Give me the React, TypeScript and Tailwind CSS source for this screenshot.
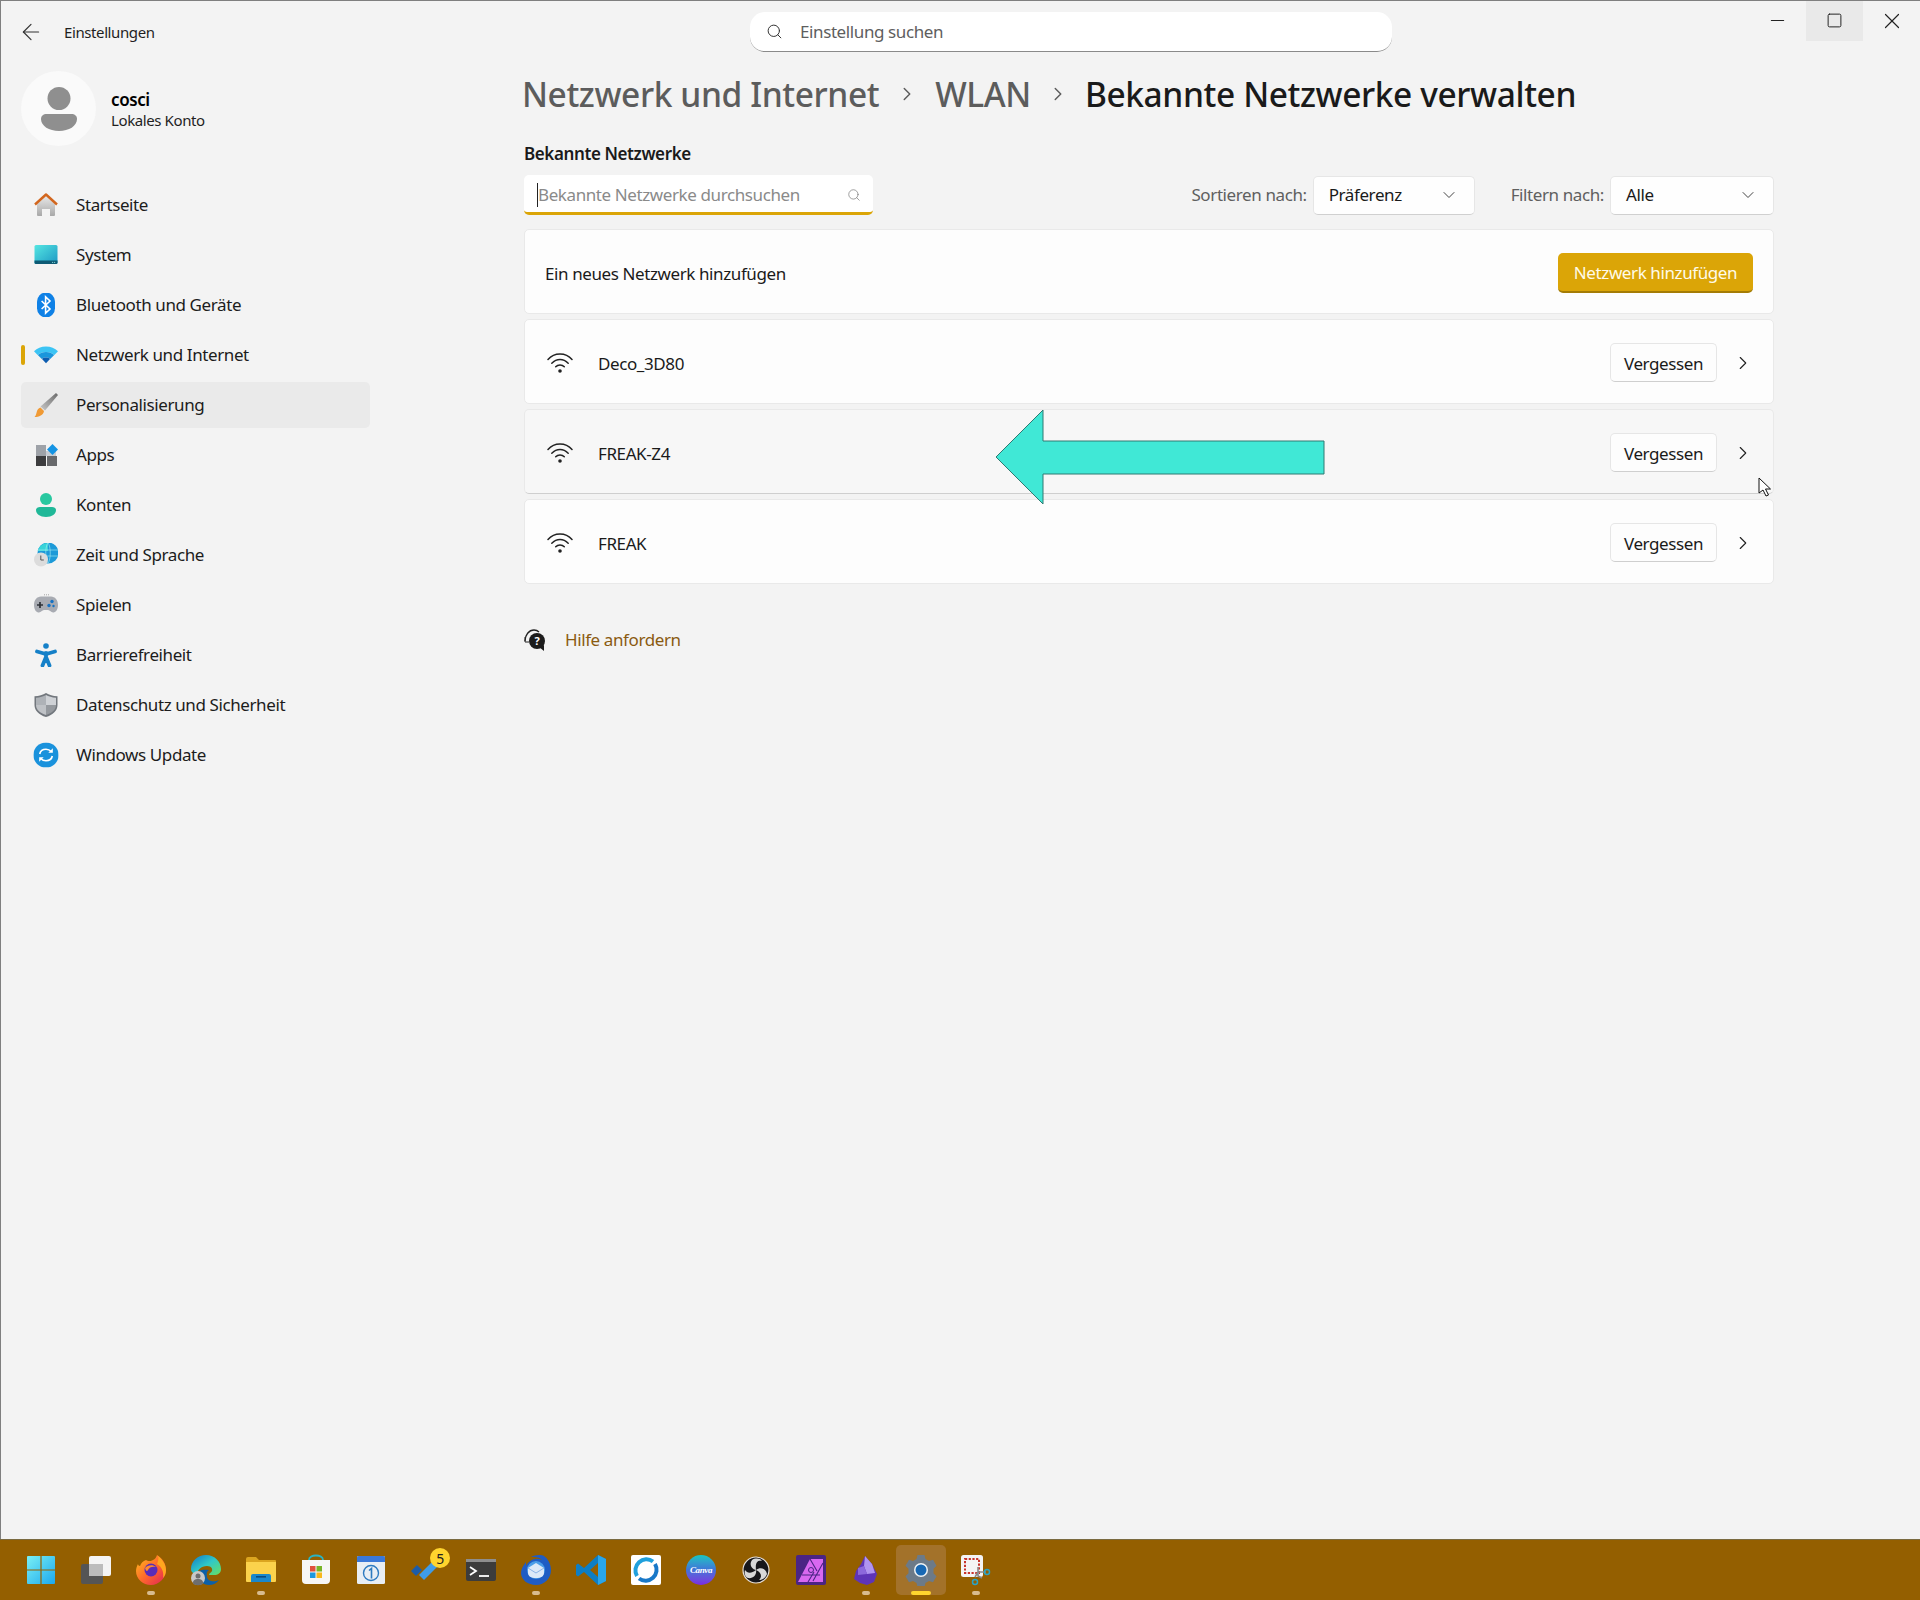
import { ArrowLeft, ChevronDown, ChevronRight, Minus, Search, Square, X } from "lucide-react";
import type { ReactNode } from "react";

const Home = () => (
  <svg viewBox="0 0 24 24" className="w-6 h-6">
    <defs>
      <linearGradient id="h1" x1="0" y1="0" x2="0" y2="1">
        <stop offset="0" stopColor="#e8e8e8" />
        <stop offset="1" stopColor="#a8a8a8" />
      </linearGradient>
    </defs>
    <path d="M3 11 12 3l9 8v11a1 1 0 0 1-1 1h-4v-7H8v7H4a1 1 0 0 1-1-1z" fill="url(#h1)" />
    <path d="M1 11.500 12 1.500l11 10" fill="none" stroke="#d2661e" strokeWidth="2.400" strokeLinejoin="round" />
  </svg>
);

const SystemIcon = () => (
  <svg viewBox="0 0 24 24" className="w-6 h-6">
    <defs>
      <linearGradient id="s1" x1="0" y1="0" x2="1" y2="1">
        <stop offset="0" stopColor="#55e6e2" />
        <stop offset="1" stopColor="#1c98c4" />
      </linearGradient>
    </defs>
    <rect x="0.500" y="2" width="23" height="19" rx="1.500" fill="url(#s1)" />
    <path d="M.5 17.500h23V20a1.500 1.500 0 0 1-1.500 1H2A1.500 1.500 0 0 1 .5 20z" fill="#0d5a74" />
    <path d="M18 19.400h1.200M20 19.400h1.200" stroke="#9ee" strokeWidth=".8" />
  </svg>
);

const BluetoothIcon = () => (
  <svg viewBox="0 0 24 24" className="w-6 h-6">
    <rect x="3" y="-.5" width="18" height="25" rx="9" fill="#0f81e6" />
    <path d="m7.600 8 8.400 8-4.400 4.200V3.800L16 8l-8.400 8" fill="none" stroke="#fff" strokeWidth="1.600" />
  </svg>
);

const WifiColor = () => (
  <svg viewBox="0 0 24 24" className="w-6 h-6">
    <path d="M0 8.200C3 5.400 7.300 3.600 12 3.600s9 1.800 12 4.600l-3.600 3.700C18 10 15.200 9 12 9s-6 1-8.400 2.900z" fill="#3cc4f4" />
    <path d="M3.800 12c2.200-1.900 5-3 8.200-3s6 1.100 8.200 3l-4 4c-1.200-.9-2.600-1.400-4.200-1.400s-3 .5-4.200 1.400z" fill="#1a96dc" />
    <path d="M8 16c1-.9 2.500-1.400 4-1.400s3 .5 4 1.400l-4 4.200z" fill="#0c5cb0" />
  </svg>
);

const BrushIcon = () => (
  <svg viewBox="0 0 24 24" className="w-6 h-6">
    <defs>
      <linearGradient id="b1" x1="0" y1="1" x2="1" y2="0">
        <stop offset="0" stopColor="#c8c8c8" />
        <stop offset="1" stopColor="#6a6a6a" />
      </linearGradient>
    </defs>
    <path d="M22 0 24 2 11 17.500 6.500 13.500z" fill="url(#b1)" />
    <path d="M6.500 14.500 10 18c-.5 4-5 6-9.500 6 1.800-1.700 1.700-3.800 2.500-6 .6-1.700 2-3 3.500-3.500z" fill="#f09a35" />
  </svg>
);

const AppsIcon = () => (
  <svg viewBox="0 0 24 24" className="w-6 h-6">
    <rect x="2" y="2" width="10" height="11" fill="#9ea2a8" />
    <rect x="2" y="13" width="10" height="10" fill="#3c3c3e" />
    <rect x="13" y="13" width="10" height="10" fill="#68696c" />
    <rect x="12" y="8" width="10" height="5" fill="#c8ccd2" />
    <path d="m18.500 1 5.500 5.500-5.500 5.500-5.500-5.500z" fill="#1594e4" />
  </svg>
);

const KontenIcon = () => (
  <svg viewBox="0 0 24 24" className="w-6 h-6">
    <circle cx="12" cy="6" r="6" fill="#28c8a0" />
    <path d="M2 17c0-2 2-3 4-3h12c2 0 4 1 4 3 0 4-4 7-10 7S2 21 2 17z" fill="#20b898" />
  </svg>
);

const ZeitIcon = () => (
  <svg viewBox="0 0 24 24" className="w-6 h-6">
    <circle cx="14" cy="10" r="10.500" fill="#1d9ad8" />
    <path d="M14 0c-5 0-9 3-10.300 8h10.300zM14 0v10" fill="#39d4d8" />
    <path d="M4 7h20M4 13h20M14 0c-3 3-3 17 0 20M14 0c3 3 3 17 0 20" fill="none" stroke="#a6ecf4" strokeWidth=".6" />
    <circle cx="7" cy="16.500" r="7" fill="#dcdcdc" />
    <path d="M6.800 12.500v4.500h3" fill="none" stroke="#555" strokeWidth="1" />
  </svg>
);

const GameIcon = () => (
  <svg viewBox="0 0 24 24" className="w-6 h-6">
    <path d="M7 3.500h10c4 0 7 3.500 7 8.500 0 5-2.500 7.500-5 7.500-2 0-3-2.500-5-2.500h-4c-2 0-3 2.500-5 2.500-2.500 0-5-2.500-5-7.500 0-5 3-8.500 7-8.500z" fill="#a8abb2" />
    <path d="M6 9v6M3 12h6" stroke="#2e3238" strokeWidth="1.700" />
    <circle cx="18" cy="8.500" r="1.700" fill="#1672c4" />
    <circle cx="15" cy="12.500" r="1.700" fill="#1672c4" />
    <circle cx="19.500" cy="13" r="1.200" fill="#1672c4" />
    <path d="M10 1.800h.8M12 1.800h.8M14 1.800h.8" stroke="#777" strokeWidth=".8" />
  </svg>
);

const AccessIcon = () => (
  <svg viewBox="0 0 24 24" className="w-6 h-6">
    <circle cx="12" cy="3" r="2.800" fill="#1580c8" />
    <path d="M3 8.500 10 10.500h4l7-2M12 10v5M12 14l-3.500 8.500M12 14l3.500 8.500" fill="none" stroke="#1580c8" strokeWidth="3.800" strokeLinecap="round" strokeLinejoin="round" />
  </svg>
);

const ShieldIcon = () => (
  <svg viewBox="0 0 24 24" className="w-6 h-6">
    <path d="M12 0c3 2 7 3 11.500 3.200V12c0 5.500-4.500 10-11.500 12C5 22 .5 17.500.5 12V3.200C5 3 9 2 12 0z" fill="#72777d" />
    <path d="M12 2c2.500 1.500 6 2.500 10 2.700V12H12z" fill="#cfd2d6" />
    <path d="M12 2C9.500 3.500 6 4.500 2 4.700V12h10z" fill="#aeb2b7" />
    <path d="M2 12c0 4.500 4 8.200 10 10V12z" fill="#bfc2c6" />
    <path d="M22 12c0 4.500-4 8.200-10 10V12z" fill="#95999e" />
  </svg>
);

const UpdateIcon = () => (
  <svg viewBox="0 0 24 24" className="w-6 h-6 scale-105">
    <circle cx="12" cy="12" r="12" fill="#1a92dc" />
    <path d="M6 11c.6-2.800 3-4.500 6-4.500 2 0 3.700.8 5 2.200M18 13c-.6 2.800-3 4.500-6 4.500-2 0-3.700-.8-5-2.200" fill="none" stroke="#fff" strokeWidth="1.600" />
    <path d="m18.500 5.500v4.300h-4.300zM5.500 18.500v-4.300h4.300z" fill="#fff" />
  </svg>
);

const WifiLine = () => (
  <svg viewBox="0 0 26 24" className="w-[26px] h-6" fill="none" stroke="#222" strokeLinecap="round">
    <path d="M1 8.500C4 5 8.300 3 13 3s9 2 12 5.500" strokeWidth="1.500" />
    <path d="M4.800 12.200C7 10 9.800 8.500 13 8.500s6 1.500 8.200 3.700" strokeWidth="1.500" />
    <path d="M8.700 15.800C9.900 14.500 11.300 14 13 14s3.100.5 4.300 1.800" strokeWidth="1.500" />
    <circle cx="13" cy="20" r="1.800" fill="#222" stroke="none" />
  </svg>
);

// taskbar logos
const WinLogo = () => (
  <svg viewBox="0 0 30 30" className="w-[30px] h-[30px]">
    <defs>
      <linearGradient id="w1" x1="0" y1="0" x2="1" y2="1">
        <stop offset="0" stopColor="#7af0f4" />
        <stop offset="1" stopColor="#1ca8ee" />
      </linearGradient>
    </defs>
    <path d="M1 2a1 1 0 0 1 1-1h12.400v13.400H1zM15.600 1H28a1 1 0 0 1 1 1v12.400H15.600zM1 15.600h13.400V29H2a1 1 0 0 1-1-1zM15.600 15.600H29V28a1 1 0 0 1-1 1H15.600z" fill="url(#w1)" />
  </svg>
);

const TaskView = () => (
  <svg viewBox="0 0 32 30" className="w-8 h-[30px]">
    <rect x="9" y="1" width="22" height="20" rx="2" fill="#f4f4f4" />
    <rect x="1" y="9" width="22" height="20" rx="2" fill="#555" />
    <rect x="9" y="9" width="14" height="12" fill="#bcbcbc" />
  </svg>
);

const Firefox = () => (
  <svg viewBox="0 0 32 32" className="w-8 h-8">
    <defs>
      <linearGradient id="f1" x1="0" y1="0" x2="1" y2="1">
        <stop offset="0" stopColor="#ffc21c" />
        <stop offset=".5" stopColor="#ff6a2a" />
        <stop offset="1" stopColor="#e0205c" />
      </linearGradient>
    </defs>
    <path d="M22 1c5 3 9 8 9 15 0 8-7 15-15 15S1 25 1 17c0-3 1-5 2-7 0 1 1 2 2 2 1-3 3-5 6-6 1 1 3 1 5 1 2-1 5-2 6-6z" fill="url(#f1)" />
    <path d="M23 2c4 3 8 8 8 14 0 3-1 6-3 8 1-6-1-11-6-14 1-3 2-5 1-8z" fill="#ffa71e" />
    <circle cx="16" cy="16" r="6.500" fill="#5a2cb8" />
    <path d="M10 14c2-3 8-4 11-1-3-1-7 0-8 3-1 2-2 1-3-2z" fill="#ff8a2c" />
  </svg>
);

const Edge = () => (
  <svg viewBox="0 0 32 32" className="w-8 h-8">
    <defs>
      <linearGradient id="e1" x1="0" y1="0" x2="1" y2="1">
        <stop offset="0" stopColor="#1078c8" />
        <stop offset=".5" stopColor="#30c8c8" />
        <stop offset="1" stopColor="#68e060" />
      </linearGradient>
    </defs>
    <path d="M1 15C1 7 8 1 16 1c9 0 15 7 15 14 0 4-3 6-7 6h-5c0-2 2-2 3-4 .8-2-.5-5-5-5-6 0-10 4-10 9 0-1-6-1-6-6z" fill="url(#e1)" />
    <path d="M8 20c0 6 5 11 11 11 4 0 8-2 10-5-4 2-11 2-12-3-.8-4 0-6 2-7-6-1-11 0-11 4z" fill="#0c60a8" />
    <circle cx="8" cy="24" r="7" fill="#c8c8c8" />
    <circle cx="8" cy="22" r="2.500" fill="#6e6e6e" />
    <path d="M3 29c0-3 2-4 5-4s5 1 5 4-10 3-10 0z" fill="#6e6e6e" />
  </svg>
);

const Folder = () => (
  <svg viewBox="0 0 32 32" className="w-8 h-8">
    <path d="M1 5a2 2 0 0 1 2-2h8l3 3h16a1 1 0 0 1 1 1v5H1z" fill="#dba520" />
    <path d="M1 8h30v19a1 1 0 0 1-1 1H2a1 1 0 0 1-1-1z" fill="#fbd24c" />
    <path d="M6 28v-6a2 2 0 0 1 2-2h16a2 2 0 0 1 2 2v6z" fill="#1a88cc" />
    <rect x="11" y="22" width="10" height="1.600" fill="#0a4c80" />
  </svg>
);

const Store = () => (
  <svg viewBox="0 0 32 32" className="w-8 h-8">
    <path d="M9 6c0-6 14-6 14 0" fill="none" stroke="#28b4c4" strokeWidth="1.800" />
    <path d="M2 6h28v20a4 4 0 0 1-4 4H6a4 4 0 0 1-4-4z" fill="#f6f6f6" />
    <rect x="10" y="12" width="5.500" height="5.500" fill="#e0503c" />
    <rect x="16.500" y="12" width="5.500" height="5.500" fill="#78b428" />
    <rect x="10" y="18.500" width="5.500" height="5.500" fill="#1c98e0" />
    <rect x="16.500" y="18.500" width="5.500" height="5.500" fill="#f8b81c" />
  </svg>
);

const Calendar = () => (
  <svg viewBox="0 0 30 30" className="w-[30px] h-[30px]">
    <rect x="1" y="1" width="28" height="28" rx="1.500" fill="#e8eef4" />
    <path d="M1 2.500A1.500 1.500 0 0 1 2.500 1h25A1.500 1.500 0 0 1 29 2.500V7H1z" fill="#3a78d8" />
    <circle cx="15" cy="18" r="7.500" fill="none" stroke="#2c7ac0" strokeWidth="1.400" />
    <path d="m13 15.500 2.500-2v10" fill="none" stroke="#2c7ac0" strokeWidth="1.600" />
  </svg>
);

const Todo = () => (
  <svg viewBox="0 0 32 24" className="w-8 h-6">
    <path d="m1 13 6-6 5 5-6 6z" fill="#1c5ca8" />
    <path d="m24 2 5 5-15 15-5-5z" fill="#3f9ce8" />
  </svg>
);

const Terminal = () => (
  <svg viewBox="0 0 32 24" className="w-8 h-6">
    <rect x="1" y="1" width="30" height="22" rx="2" fill="#3c3c3c" />
    <rect x="1" y="1" width="30" height="3" fill="#8e8e8e" />
    <path d="m5 9 6 4-6 4" fill="none" stroke="#fff" strokeWidth="1.800" />
    <path d="M14 18h10" stroke="#fff" strokeWidth="1.800" />
  </svg>
);

const Thunderbird = () => (
  <svg viewBox="0 0 32 32" className="w-8 h-8">
    <path d="M6 8C3 12 1 15 1 19c0 7 7 12 15 12 9 0 15-7 15-15 0-7-4-12-7-14-3-2-10-1-13 1 5 0 8 0 11 3-6-3-13 0-16 6z" fill="#1f5cc4" />
    <circle cx="16" cy="16" r="9" fill="#4a9de8" />
    <path d="M8 14 16 9l8 5v5c0 3-3 5-8 5s-8-2-8-5z" fill="#dce8f8" />
    <path d="m8 14 8 5 8-5" fill="none" stroke="#8cb4e8" strokeWidth="1" />
  </svg>
);

const VsCode = () => (
  <svg viewBox="0 0 32 32" className="w-8 h-8">
    <path d="M23 1 31 5v22l-8 4-14-13-6 4.500L1 21v-10l2-1.500 6 4.500z" fill="#0d7ec4" />
    <path d="M23 1 31 5v22l-8 4z" fill="#2aa6ea" />
    <path d="m23 9-8 7 8 7z" fill="#945f00" />
  </svg>
);

const RingApp = () => (
  <svg viewBox="0 0 30 30" className="w-[30px] h-[30px]">
    <rect width="30" height="30" rx="2" fill="#fff" />
    <path d="M22 6.500A11 11 0 0 0 6 21" fill="none" stroke="#1fa0dc" strokeWidth="4" />
    <path d="M8 23.500A11 11 0 0 0 24 9" fill="none" stroke="#1878c8" strokeWidth="4" />
  </svg>
);

const Canva = () => (
  <div className="w-[30px] h-[30px] rounded-full bg-gradient-to-b from-[#18c4c0] via-[#3f72d8] to-[#7a28e0] flex items-center justify-center">
    <span className="text-white italic text-[9px] font-['Liberation_Serif',serif] font-bold leading-none">Canva</span>
  </div>
);

const Obs = () => (
  <svg viewBox="0 0 28 28" className="w-7 h-7">
    <circle cx="14" cy="14" r="13" fill="#17171b" stroke="#e8e0d8" strokeWidth="1.200" />
    <path d="M14 14C9 13 7 8 10 4c3-2 8-2 10 1-4-1-7 1-6 9zM14 14c4-3 10-2 11 4-1 3-4 6-8 6 3-3 3-7-3-10zM14 14c1 5-3 9-8 8-3-1-4-5-3-8 2 3 6 4 11 0z" fill="#d8d8d8" />
  </svg>
);

const Affinity = () => (
  <svg viewBox="0 0 30 30" className="w-[30px] h-[30px]">
    <rect width="30" height="30" rx="2" fill="#4a2484" />
    <path d="M2 27 14 4h13v23z" fill="#d868f0" />
    <path d="M14 4l7 12M27 8 17 26M6 20h18M12 27l6-10" fill="none" stroke="#4a2484" strokeWidth="1.100" />
    <circle cx="15" cy="15" r="2.500" fill="none" stroke="#4a2484" strokeWidth="1" />
  </svg>
);

const Obsidian = () => (
  <svg viewBox="0 0 24 30" className="w-6 h-[30px]">
    <path d="M11 1 18 9l5 10-3 8-7 3-7-2-6-4 2-8 5-7z" fill="#5e34b8" />
    <path d="M11 1 18 9l3 9-8 1-3-8z" fill="#b094f0" />
    <path d="M4 13 10 11l3 8-9 1z" fill="#8c68dc" />
  </svg>
);

const Gear = () => (
  <svg viewBox="0 0 32 32" className="w-8 h-8">
    <path d="M12.500 1h7l1 4 3.500 2 4-1.200 3.500 6-3 2.900v4.600l3 2.900-3.500 6-4-1.200-3.500 2-1 4h-7l-1-4-3.500-2-4 1.200-3.500-6 3-2.900v-4.600l-3-2.900 3.500-6 4 1.200 3.500-2z" fill="#6c7a88" />
    <circle cx="16" cy="16" r="7" fill="#eef2f4" />
    <circle cx="16" cy="16" r="5.500" fill="#1768b4" />
  </svg>
);

const Snip = () => (
  <svg viewBox="0 0 32 32" className="w-8 h-8">
    <rect x="1" y="1" width="22" height="22" rx="2.500" fill="#f4f4f4" />
    <rect x="5" y="5" width="14" height="14" fill="none" stroke="#c8342c" strokeWidth="2" strokeDasharray="2.200 1.500" />
    <path d="M18 13v9l4 2M26 18h-8l-3 5" fill="none" stroke="#8a8a8a" strokeWidth="1.600" />
    <circle cx="27" cy="18" r="2.500" fill="none" stroke="#28a4c8" strokeWidth="1.500" />
    <circle cx="15" cy="28" r="2.500" fill="none" stroke="#28a4c8" strokeWidth="1.500" />
  </svg>
);

const nav = [
  { label: "Startseite", icon: <Home /> },
  { label: "System", icon: <SystemIcon /> },
  { label: "Bluetooth und Geräte", icon: <BluetoothIcon /> },
  { label: "Netzwerk und Internet", icon: <WifiColor />, active: true },
  { label: "Personalisierung", icon: <BrushIcon />, hover: true },
  { label: "Apps", icon: <AppsIcon /> },
  { label: "Konten", icon: <KontenIcon /> },
  { label: "Zeit und Sprache", icon: <ZeitIcon /> },
  { label: "Spielen", icon: <GameIcon /> },
  { label: "Barrierefreiheit", icon: <AccessIcon /> },
  { label: "Datenschutz und Sicherheit", icon: <ShieldIcon /> },
  { label: "Windows Update", icon: <UpdateIcon /> },
];

function TaskItem({ children, dot, active }: { children: ReactNode; dot?: boolean; active?: boolean }) {
  return (
    <div className={`relative w-[50px] h-[50px] mx-[2.5px] flex items-center justify-center rounded-[5px] ${active ? "bg-[#a3722a]" : ""}`}>
      {children}
      {dot && !active && <span className="absolute bottom-[0px] left-[21px] w-2 h-1 rounded-full bg-[#d8bc90]" />}
      {active && <span className="absolute bottom-[0px] left-[15px] w-5 h-1 rounded-full bg-[#ffd52e]" />}
    </div>
  );
}

function NetworkRow({ name, hover }: { name: string; hover?: boolean }) {
  return (
    <div className={`h-[85px] pt-[2px] rounded-[5px] flex items-center border border-[#e9e9e9] ${hover ? "bg-[#f7f7f7] border-b-[#cfcfcf]" : "bg-[#fdfdfd]"}`}>
      <div className="ml-[22px] flex"><WifiLine /></div>
      <span className="ml-[25px] pt-[3px] text-[#1a1a1a] flex-1">{name}</span>
      <div className="w-[107px] h-[39px] pt-[2px] flex items-center justify-center rounded-[5px] bg-[#fdfdfd] border border-[#e6e6e6] border-b-[#cfcfcf] text-[#1a1a1a]">Vergessen</div>
      <div className="w-[56px] pr-[4px] flex justify-center text-[#222]"><ChevronRight size={22} strokeWidth={1.2} /></div>
    </div>
  );
}

function App() {
  return (
    <div className="relative w-[1920px] h-[1600px] flex flex-col bg-[#f3f3f3] overflow-hidden text-[17px] tracking-[-0.4px] font-['Noto_Sans','Open_Sans',sans-serif]">
      <div className="flex-1 min-h-0 border-t border-l border-[#7f7f7f]">
        {/* title bar */}
        <div className="h-[52px] flex">
          <div className="w-[749px] flex items-start pt-[20px]">
            <div className="ml-[17px] flex items-center h-[22px] text-[#333]"><ArrowLeft size={26} strokeWidth={1.100} /></div>
            <span className="ml-[20px] text-[15px] leading-[22px] text-[#1f1f1f]">Einstellungen</span>
          </div>
          <div className="w-[642px] h-[40px] mt-[11px] rounded-[15px] bg-white border-b border-[#8a8a8a] flex items-center">
            <Search size={17} strokeWidth={1.4} className="ml-[16px] text-[#333]" />
            <span className="ml-[17px] text-[#5e5e5e]">Einstellung suchen</span>
          </div>
          <div className="flex-1 flex justify-end">
            <div className="w-[57px] h-[40px] pb-[1px] flex items-center justify-center text-[#222]"><Minus size={21} strokeWidth={1.3} /></div>
            <div className="w-[57px] h-[40px] pb-[1px] flex items-center justify-center text-[#222] bg-[#e9e9e9]"><Square size={17} strokeWidth={1.4} /></div>
            <div className="w-[57px] h-[40px] pb-[1px] flex items-center justify-center text-[#222]"><X size={26} strokeWidth={1.100} /></div>
          </div>
        </div>
        <div className="flex">
          {/* sidebar */}
          <div className="w-[523px] pl-[20px] pt-[18px]">
            <div className="flex items-center">
              <div className="w-[75px] h-[75px] rounded-full bg-[#fafafa] flex items-center justify-center">
                <svg viewBox="0 0 36 44" className="w-[36px] h-[44px]">
                  <circle cx="18" cy="11.500" r="11.500" fill="#8f8f8f" />
                  <path d="M0 32c0-3 2-5 6-5h24c4 0 6 2 6 5 0 7-8 12-18 12S0 39 0 32z" fill="#8f8f8f" />
                </svg>
              </div>
              <div className="ml-[15px] pt-[2px] flex flex-col">
                <span className="text-[17px] leading-[21px] font-semibold text-black">cosci</span>
                <span className="text-[15px] leading-[21px] text-[#1f1f1f]">Lokales Konto</span>
              </div>
            </div>
            <div className="mt-[36px] w-[349px] flex flex-col gap-[4px]">
              {nav.map((n) => (
                <div key={n.label} className={`relative h-[46px] pl-[13px] flex items-center gap-[18px] rounded-[5px] text-[#1c1c1c] ${n.hover ? "bg-[#eaeaea]" : ""}`}>
                  {n.active && <span className="absolute left-0 top-[13px] w-1 h-5 rounded-full bg-[#dba507]" />}
                  {n.icon}
                  <span>{n.label}</span>
                </div>
              ))}
            </div>
          </div>
          {/* main */}
          <div className="w-[1250px] pt-[18px]">
            <div className="h-[48px] pb-[2px] flex items-center text-[33.500px] font-medium leading-[46px] -ml-[2px]">
              <span className="text-[#5c5c5c]">Netzwerk und Internet</span>
              <ChevronRight size={22} strokeWidth={1.6} className="mx-[17px] text-[#5c5c5c]" />
              <span className="text-[#5c5c5c]">WLAN</span>
              <ChevronRight size={22} strokeWidth={1.6} className="mx-[16px] text-[#5c5c5c]" />
              <span className="text-[#1a1a1a]">Bekannte Netzwerke verwalten</span>
            </div>
            <div className="mt-[23px] h-[24px] leading-[24px] font-semibold text-[#1a1a1a]">Bekannte Netzwerke</div>
            <div className="mt-[9px] flex items-center h-[40px]">
              <div className="w-[349px] h-[40px] pt-[2px] bg-white rounded-[5px] border-b-[3px] border-[#dba507] flex items-center pl-[13px] pr-[12px]">
                <span className="w-px h-[24px] bg-[#222]" />
                <span className="flex-1 text-[#8a8a8a]">Bekannte Netzwerke durchsuchen</span>
                <Search size={14} strokeWidth={1.2} className="text-[#777]" />
              </div>
              <span className="ml-auto text-[#5f5f5f]">Sortieren nach:</span>
              <div className="ml-[6px] w-[162px] h-[39px] bg-[#fefefe] rounded-[5px] border border-[#e6e6e6] border-b-[#d0d0d0] pl-[15px] pr-[15px] flex items-center justify-between text-[#1a1a1a]">
                Präferenz
                <ChevronDown size={20} strokeWidth={1.2} className="text-[#444]" />
              </div>
              <span className="ml-[36px] text-[#5f5f5f]">Filtern nach:</span>
              <div className="ml-[6px] w-[164px] h-[39px] bg-[#fefefe] rounded-[5px] border border-[#e6e6e6] border-b-[#d0d0d0] pl-[15px] pr-[15px] flex items-center justify-between text-[#1a1a1a]">
                Alle
                <ChevronDown size={20} strokeWidth={1.2} className="text-[#444]" />
              </div>
            </div>
            <div className="mt-[14px] flex flex-col gap-[5px]">
              <div className="h-[85px] pt-[2px] rounded-[5px] flex items-center justify-between border border-[#e9e9e9] bg-[#fdfdfd] pl-[20px] pr-[20px]">
                <span className="pt-[3px] text-[#1a1a1a]">Ein neues Netzwerk hinzufügen</span>
                <div className="w-[195px] h-[40px] pt-[2px] rounded-[5px] bg-[#dba507] border-b-2 border-[#a47c05] flex items-center justify-center text-[#fffbe8]">Netzwerk hinzufügen</div>
              </div>
              <NetworkRow name="Deco_3D80" />
              <NetworkRow name="FREAK-Z4" hover />
              <NetworkRow name="FREAK" />
            </div>
            <div className="mt-[44px] h-[24px] flex items-center">
              <svg viewBox="0 0 22 22" className="w-[22px] h-[22px]">
                <path d="M1 12C1 6 5 1 10 1c2 0 4 1 5 2" fill="none" stroke="#222" strokeWidth="1.300" />
                <path d="M1 8v5h4" fill="none" stroke="#222" strokeWidth="1" />
                <circle cx="13" cy="12" r="8" fill="#1c1c1c" />
                <path d="m15 18 5 4v-6z" fill="#1c1c1c" />
                <text x="13" y="16" textAnchor="middle" fontSize="11" fontWeight="700" fill="#fff">?</text>
              </svg>
              <span className="ml-[19px] text-[#8a5a10]">Hilfe anfordern</span>
            </div>
          </div>
        </div>
      </div>
      {/* taskbar */}
      <div className="h-[61px] bg-[#945f00] border-t border-[#7a6a40] pt-[5px] pl-[13.500px] flex">
        <TaskItem><WinLogo /></TaskItem>
        <TaskItem><TaskView /></TaskItem>
        <TaskItem dot><Firefox /></TaskItem>
        <TaskItem><Edge /></TaskItem>
        <TaskItem dot><Folder /></TaskItem>
        <TaskItem><Store /></TaskItem>
        <TaskItem><Calendar /></TaskItem>
        <TaskItem>
          <Todo />
          <span className="absolute top-[3px] right-[1px] w-5 h-5 rounded-full bg-[#ffd52e] text-[14px] text-[#222] flex items-center justify-center">5</span>
        </TaskItem>
        <TaskItem><Terminal /></TaskItem>
        <TaskItem dot><Thunderbird /></TaskItem>
        <TaskItem><VsCode /></TaskItem>
        <TaskItem><RingApp /></TaskItem>
        <TaskItem><Canva /></TaskItem>
        <TaskItem><Obs /></TaskItem>
        <TaskItem><Affinity /></TaskItem>
        <TaskItem dot><Obsidian /></TaskItem>
        <TaskItem active><Gear /></TaskItem>
        <TaskItem dot><Snip /></TaskItem>
      </div>
      {/* annotation arrow and mouse pointer on top of the screenshot */}
      <svg viewBox="0 0 331 96" className="absolute left-[995px] top-[409px] w-[331px] h-[96px]">
        <path d="M1 48 48 1v31h281v33H48v30z" fill="#40e8d6" stroke="#2f7a72" strokeWidth="1" />
      </svg>
      <svg viewBox="0 0 14 20" className="absolute left-[1758px] top-[477px] w-[14px] h-[20px]">
        <path d="M1 1v15l4-3 3 6 2.500-1-3-6h5z" fill="#fff" stroke="#111" strokeWidth="1" />
      </svg>
    </div>
  );
}

export default App;
